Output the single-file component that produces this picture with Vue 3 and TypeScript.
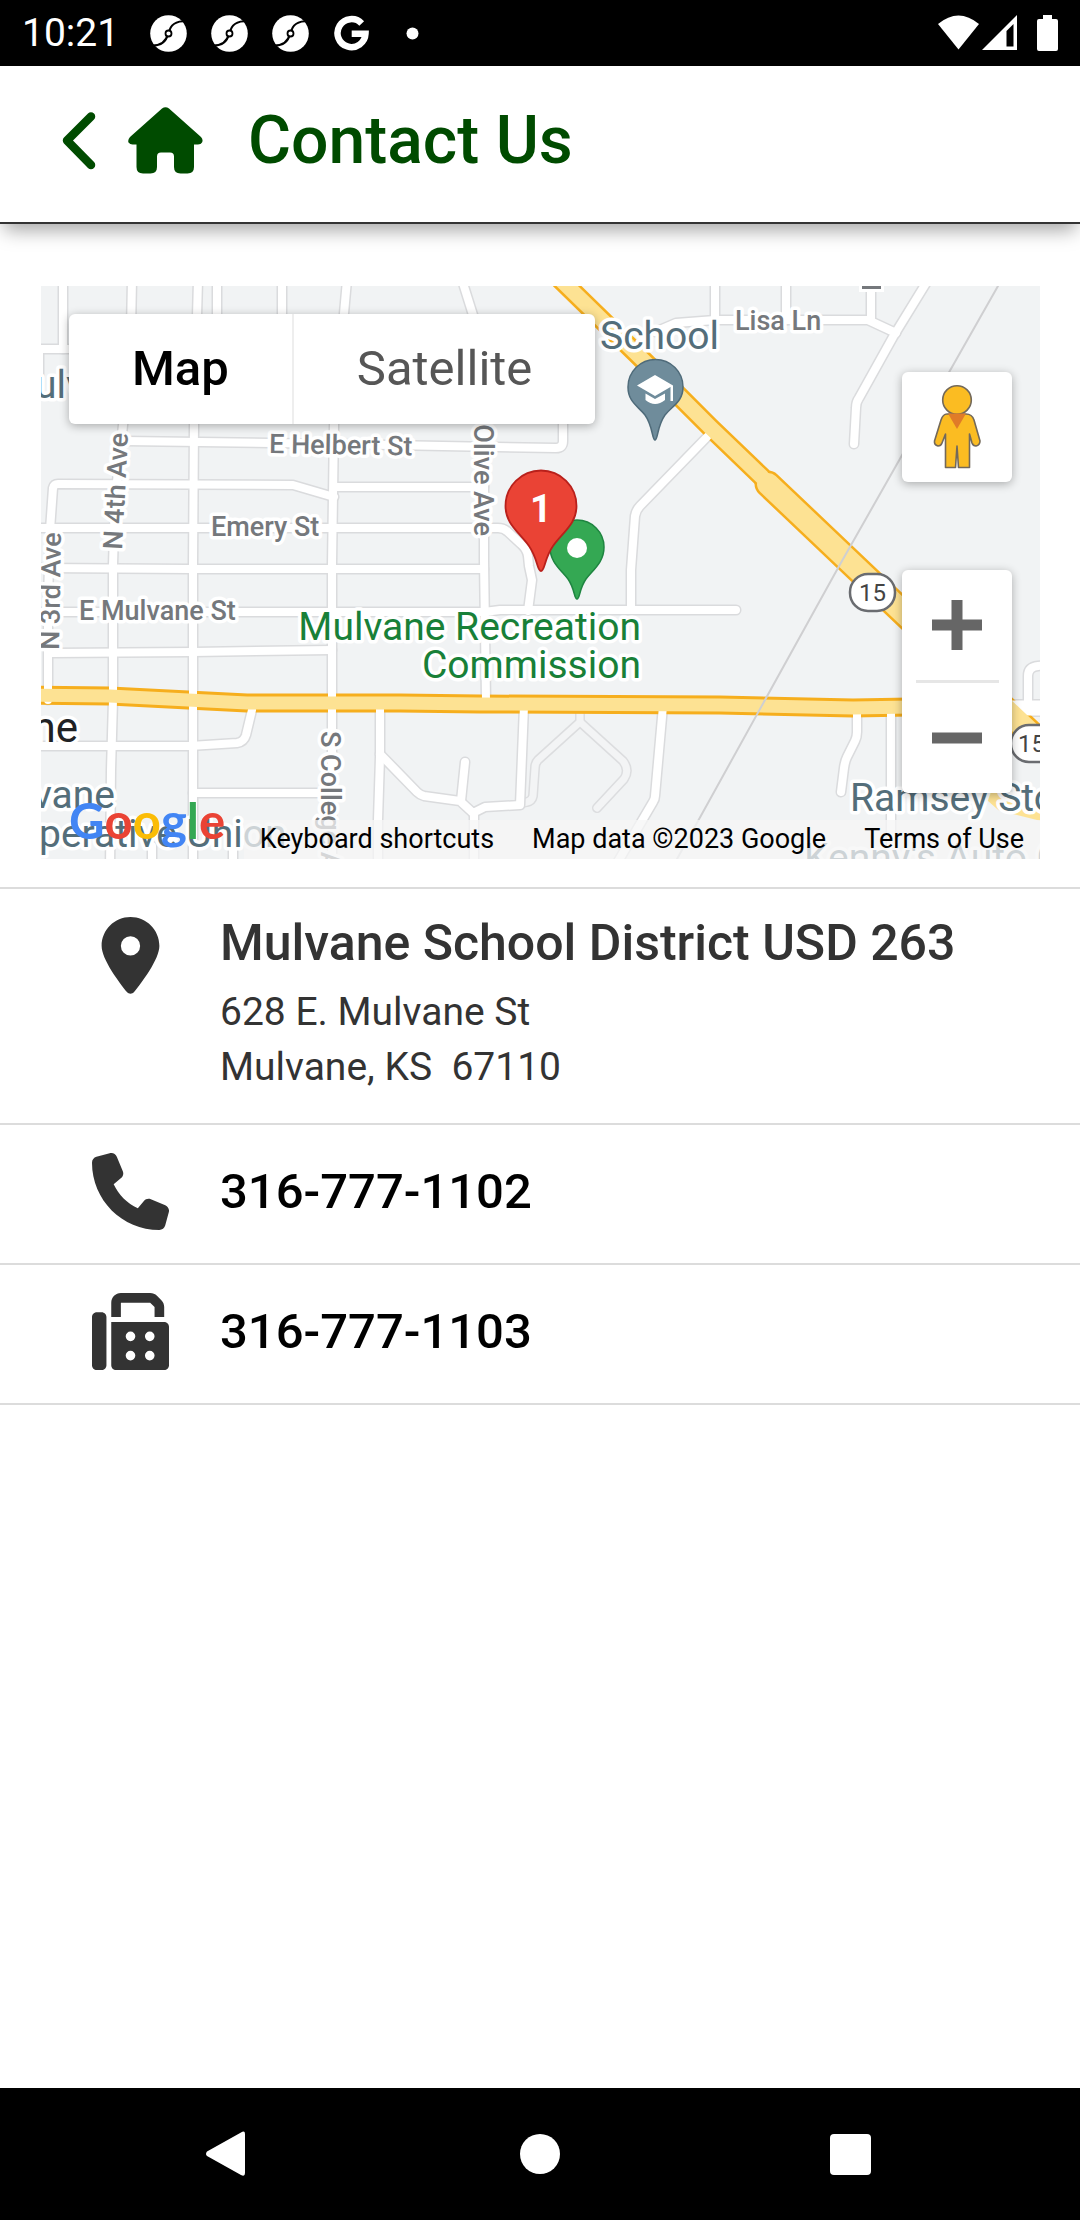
<script setup lang="ts">
import { ref } from 'vue'

type MapType = 'Map' | 'Satellite'

interface PhoneLine {
  id: string
  label: string
  number: string
  icon: string
}

const mapTypes: MapType[] = ['Map', 'Satellite']
const mapType = ref<MapType>('Map')

const pinIcon =
  'M215.7 499.2C267 435 384 279.4 384 192C384 86 298 0 192 0S0 86 0 192c0 87.4 117 243 168.3 307.2c12.3 15.3 35.1 15.3 47.4 0zM192 128a64 64 0 1 1 0 128 64 64 0 1 1 0-128z'

const phones: PhoneLine[] = [
  {
    id: 'phone',
    label: 'Phone',
    number: '316-777-1102',
    icon: 'M164.9 24.6c-7.7-18.6-28-28.5-47.4-23.2l-88 24C12.1 30.2 0 46 0 64C0 311.4 200.6 512 448 512c18 0 33.8-12.1 38.6-29.5l24-88c5.3-19.4-4.6-39.7-23.2-47.4l-96-40c-16.3-6.8-35.2-2.1-46.3 11.6L304.7 368C234.3 334.7 177.3 277.7 144 207.3L193.3 167c13.7-11.2 18.4-30 11.6-46.3l-40-96z',
  },
  {
    id: 'fax',
    label: 'Fax',
    number: '316-777-1103',
    icon: 'M128 64v96h64V64H386.7L416 93.3V160h64V93.3c0-17-6.7-33.3-18.7-45.3L432 18.7C420 6.7 403.7 0 386.7 0H192c-35.3 0-64 28.7-64 64zM0 160V480c0 17.7 14.3 32 32 32H64c17.7 0 32-14.3 32-32V160c0-17.7-14.3-32-32-32H32c-17.7 0-32 14.3-32 32zm480 32H128V480c0 17.7 14.3 32 32 32H480c17.7 0 32-14.3 32-32V224c0-17.7-14.3-32-32-32zM256 256a32 32 0 1 1 0 64 32 32 0 1 1 0-64zm96 32a32 32 0 1 1 64 0 32 32 0 1 1 -64 0zm32 96a32 32 0 1 1 0 64 32 32 0 1 1 0-64zM224 416a32 32 0 1 1 64 0 32 32 0 1 1 -64 0z',
  },
]

// Local streets: drawn once as a grey casing and once as the white surface.
const streets: string[] = [
  'M63 280V349',
  'M36 349H120',
  'M39 349V376',
  'M132 280L130 380L123 425L115 500L113 565V700L111 770L110 870',
  'M198 280L194 425L193 565V870',
  'M217 280V380',
  'M282 280V380',
  'M347 280L334 425L332 565V870',
  'M125 441L335 444L556 448Q563 448 563 441V415',
  'M48 700V600L50 530L53 488Q54 484 58 484L293 485L334 497',
  'M334 487H484',
  'M36 528H498Q504 528 508 532L521 544Q527 549 528 556L529 566L532 580L528 611',
  'M36 568L190 569H484',
  'M36 612H484L500 610H736',
  'M52 653L193 652L332 650',
  'M462 280L484 350V560L486 700',
  'M707 437L640 506Q636 510 635 516L631 570V608',
  'M715 280V320',
  'M786 280V320',
  'M871 288V320',
  'M655 332L676 323L715 320H868L896 333',
  'M928 280L893 337L859 398Q856 402 856 408L854 444',
  'M36 746H190L237 743Q244 742 246 735L252 710',
  'M193 793H332',
  'M152 846V870',
  'M233 846V870',
  'M380 706V757L378 820V870',
  'M380 754L417 792Q420 795 424 796L460 801L473 813L485 807L520 805L524 706',
  'M465 762L461 801',
  'M474 812V870',
  'M663 706L655 796Q655 799 653 802L616 865',
  'M857 706V732Q857 737 855 741L847 757Q845 761 844 768L841 792',
  'M891 706V870',
  'M1028 708V676Q1028 667 1038 666L1050 665',
]

const drives: string[] = [
  'M580 706V722L538 760Q535 763 535 768L533 796Q532 801 527 802L515 805',
  'M580 722L623 761Q630 770 624 779L597 808',
]

const highways: string[] = [
  'M30 695L110 696L188 700L247 703H400L480 704L720 705L853 708L910 707',
]
</script>

<template>
  <div class="screen">
    <div class="status">
      <span class="clock">10:21</span>
      <svg v-for="n in 3" :key="n" class="status-icon" viewBox="0 0 37 37" aria-hidden="true">
        <circle cx="18.500" cy="18.500" r="18.300" fill="#fff" />
        <path d="M37 6C26 6 20 9 19 18M18 19C16 27 11 31 1 30.500" fill="none" stroke="#000" stroke-width="2.200" />
        <circle cx="18.500" cy="18.500" r="3" fill="#fff" stroke="#000" stroke-width="1.800" />
      </svg>
      <svg class="status-icon" viewBox="0 0 37 37" aria-hidden="true">
        <path d="M28.700 8.500A14 14 0 1 0 32.500 18.700H18.700" fill="none" stroke="#fff" stroke-width="6.500" />
      </svg>
      <svg class="status-icon" viewBox="0 0 37 37" aria-hidden="true">
        <circle cx="18.500" cy="18.500" r="6" fill="#fff" />
      </svg>
      <svg class="signals" viewBox="0 0 122 37" aria-hidden="true">
        <path d="M0 9Q20.500 -8 41 9L20.500 34.500Z" fill="#fff" />
        <path d="M44 35L79 0V35Z" fill="#fff" />
        <path d="M68.500 16L75.500 9V31.500H68.500Z" fill="#000" />
        <path d="M105 0h9v4h4q2 0 2 2v28q0 2 -2 2h-17q-2 0 -2 -2V6q0 -2 2 -2h4z" fill="#fff" />
      </svg>
    </div>

    <header class="bar">
      <button class="bar-btn" type="button" aria-label="Back">
        <svg width="34" height="60" viewBox="0 0 34 60">
          <path d="M29 5.500L5 29.500L29 54" fill="none" stroke="#004b00" stroke-width="8.500" stroke-linecap="round" stroke-linejoin="round" />
        </svg>
      </button>
      <button class="bar-btn home" type="button" aria-label="Home">
        <svg width="75" height="69" viewBox="0 0 75 69">
          <path d="M34 1.500Q37.500 -1 41 1.500L73 30Q75.500 33 74 35.500Q73 37.500 70 37.500H66V60Q66 66.500 59.500 66.500H52.500Q46 66.500 46 60V49.500Q46 45.500 42 45.500H33Q29 45.500 29 49.500V60Q29 66.500 22.500 66.500H15Q8.500 66.500 8.500 60V37.500H4.500Q2 37.500 0.500 35.500Q-0.500 33 2 30Z" fill="#004b00" />
        </svg>
      </button>
      <h1>Contact Us</h1>
    </header>

    <main>
      <section class="map" aria-label="Map">
        <svg class="tiles" viewBox="41 286 999 573" preserveAspectRatio="xMidYMid slice">
          <rect x="40" y="286" width="1000" height="573" fill="#f1f3f4" />
          <g fill="none" stroke-linejoin="round" stroke-linecap="round">
            <path v-for="d in drives" :key="d" :d="d" stroke="#dcdddf" stroke-width="10" />
            <path v-for="d in drives" :key="d + 'f'" :d="d" stroke="#f3f4f5" stroke-width="7" />
            <path v-for="d in streets" :key="d" :d="d" stroke="#dadbdd" stroke-width="11" />
            <path d="M1005 708H1050" stroke="#dadbdd" stroke-width="18" />
            <path v-for="d in highways" :key="d" :d="d" stroke="#f6ae1d" stroke-width="19" />
            <path d="M560 279L645 362L710 427L762 477" stroke="#f6ae1d" stroke-width="20" />
            <path d="M768 484L848 560L1050 752" stroke="#f6ae1d" stroke-width="27" />
            <path d="M975 780L1002 804L1050 816" stroke="#fde293" stroke-width="14" />
            <path v-for="d in streets" :key="d + 'f'" :d="d" stroke="#fff" stroke-width="8" />
            <path d="M1005 708H1050" stroke="#fff" stroke-width="15" />
            <path v-for="d in highways" :key="d + 'f'" :d="d" stroke="#fde293" stroke-width="13" />
            <path d="M560 279L645 362L710 427L762 477" stroke="#fde293" stroke-width="15" />
            <path d="M768 484L848 560L1050 752" stroke="#fde293" stroke-width="22" />
            <path d="M998 286L838 568L677 859" stroke="#cfcfd1" stroke-width="2" />
          </g>
          <rect x="859" y="286" width="25" height="6" fill="#fff" />
          <rect x="862" y="286" width="19" height="3" fill="#75787c" />

          <g fill="#fff" stroke="#6a6c70" stroke-width="2.500">
            <rect x="850" y="574" width="45" height="37" rx="18" />
            <rect x="1011" y="725" width="45" height="37" rx="18" />
          </g>
          <g class="shield">
            <text x="859" y="601">15</text>
            <text x="1018" y="752">15</text>
          </g>

          <g class="street">
            <text transform="translate(269 453) rotate(1)">E Helbert St</text>
            <text x="211" y="536">Emery St</text>
            <text x="79" y="620">E Mulvane St</text>
            <text x="735" y="330">Lisa Ln</text>
            <text transform="translate(122 550) rotate(-87)">N 4th Ave</text>
            <text transform="translate(59 650) rotate(-89)">N 3rd Ave</text>
            <text transform="translate(474 536) rotate(90)" text-anchor="end">Olive Ave</text>
            <text transform="translate(321 731) rotate(90)">S College Ave</text>
          </g>

          <g class="place">
            <text x="600" y="349">School</text>
            <text x="35" y="398">ulv</text>
            <text x="115" y="808" text-anchor="end">vane</text>
            <text x="39" y="847">perative Union</text>
            <text x="850" y="811">Ramsey Stor</text>
            <text x="804" y="871">Kenny's Auto Ce</text>
            <text class="town" x="78" y="742" text-anchor="end">ne</text>
          </g>
          <g class="place park" text-anchor="end">
            <text x="641" y="640">Mulvane Recreation</text>
            <text x="641" y="678">Commission</text>
          </g>

          <path d="M655 440C652 440 653 426 645 415C638 406 628 402 628 387A27.500 27.500 0 0 1 683 387C683 402 672 406 665 415C657 426 658 440 655 440Z" fill="#6f8c9b" stroke="#4f6b7a" stroke-width="1.500" />
          <path d="M655 375L673 385.500V401H670.500V387L655 396L637 385.500Z" fill="#fff" />
          <path d="M645.500 393.500L655 399L665 393.500V400Q655 408 645.500 400Z" fill="#fff" />

          <path d="M577 599C574 599 575 589 568 579C560 569 550 562 550 547A27 27 0 0 1 604 547C604 562 594 569 586 579C579 589 580 599 577 599Z" fill="#34a853" stroke="#1e8540" stroke-width="1.500" />
          <circle cx="577" cy="548" r="10" fill="#fff" />

          <path d="M541 571C537 571 538 559 529 546C519 532 505.500 524 505.500 506A35.500 35.500 0 0 1 576.500 506C576.500 524 563 532 553 546C544 559 545 571 541 571Z" fill="#ea4335" stroke="#b9201b" stroke-width="1.800" />
          <text class="marker" x="541" y="522" text-anchor="middle">1</text>
        </svg>

        <div class="controls">
          <div class="types" role="group" aria-label="Map type">
            <button
              v-for="type in mapTypes"
              :key="type"
              type="button"
              :class="{ active: type === mapType }"
              @click="mapType = type"
            >
              {{ type }}
            </button>
          </div>
          <div class="side">
            <button class="tool" type="button" aria-label="Drag Pegman onto the map">
              <svg width="50" height="86" viewBox="0 0 50 86">
                <g fill="#fbbc22" stroke="#73695a" stroke-width="1.600" stroke-linejoin="round">
                  <path d="M15 30H34Q40 30 42 36L48 57Q48 61 44 62Q41 62 40 59L37.500 50V83.500H26.500L25 62L23.500 83.500H13.500V50L10 59Q9 62 6 62Q2 61 2.500 57L9 36Q11 30 15 30Z" />
                  <circle cx="25" cy="16" r="14.300" />
                </g>
                <path d="M16 29.500H34L25 45Z" fill="#e07b28" />
              </svg>
            </button>
            <div class="zoom">
              <button class="tool" type="button" aria-label="Zoom in">
                <svg width="50" height="50" viewBox="0 0 50 50"><path d="M25 0V50M0 25H50" stroke="#666" stroke-width="11" /></svg>
              </button>
              <button class="tool" type="button" aria-label="Zoom out">
                <svg width="50" height="50" viewBox="0 0 50 50"><path d="M0 25H50" stroke="#666" stroke-width="11" /></svg>
              </button>
            </div>
          </div>
        </div>

        <a class="google" href="#google" aria-label="Google">
          <span class="b">G</span><span class="r">o</span><span class="y">o</span><span class="b">g</span><span class="g">l</span><span class="r">e</span>
        </a>
        <div class="credits">
          <button type="button">Keyboard shortcuts</button>
          <span>Map data ©2023 Google</span>
          <a href="#terms">Terms of Use</a>
        </div>
      </section>

      <ul class="contacts">
        <li class="row address">
          <svg class="row-icon" viewBox="-64 0 512 512" aria-hidden="true"><path :d="pinIcon" /></svg>
          <div>
            <h2>Mulvane School District USD 263</h2>
            <address>628 E. Mulvane St<br />Mulvane, KS&nbsp; 67110</address>
          </div>
        </li>
        <li v-for="line in phones" :key="line.id" class="row">
          <svg class="row-icon" viewBox="0 0 512 512" role="img" :aria-label="line.label"><path :d="line.icon" /></svg>
          <a :href="'tel:' + line.number">{{ line.number }}</a>
        </li>
      </ul>
    </main>

    <nav class="system" aria-label="System navigation">
      <button type="button" aria-label="Back">
        <svg width="48" height="48" viewBox="0 0 48 48"><path d="M35 2.500Q39 0 39 4V43Q39 47 35 45L1 26Q-1 24 1 21.500Z" fill="#fff" /></svg>
      </button>
      <button type="button" aria-label="Home">
        <svg width="48" height="48" viewBox="0 0 48 48"><circle cx="24" cy="24" r="20" fill="#fff" /></svg>
      </button>
      <button type="button" aria-label="Recent apps">
        <svg width="48" height="48" viewBox="0 0 48 48"><rect x="4" y="4" width="41" height="41" rx="4" fill="#fff" /></svg>
      </button>
    </nav>
  </div>
</template>

<style>
body {
  margin: 0;
  background: #fff;
}
</style>

<style scoped>
.screen {
  display: flex;
  flex-direction: column;
  min-height: 100vh;
  font-family: Roboto, 'Liberation Sans', sans-serif;
  color: #000;
}

button {
  margin: 0;
  padding: 0;
  border: 0;
  background: none;
  font: inherit;
  color: inherit;
}

a {
  color: inherit;
  text-decoration: none;
}

svg {
  display: block;
}

.status {
  display: flex;
  align-items: center;
  gap: 24px;
  height: 66px;
  padding: 0 20px 0 22px;
  background: #000;
  color: #fff;
}

.clock {
  width: 104px;
  font-size: 39px;
  line-height: 44px;
}

.status-icon {
  width: 37px;
  height: 37px;
}

.signals {
  width: 122px;
  height: 37px;
  margin-left: auto;
}

.bar {
  position: relative;
  display: flex;
  align-items: center;
  height: 150px;
  padding: 0 0 6px 62px;
  border-bottom: 2px solid #333;
  background: #fff;
  box-shadow: 0 10px 18px -4px rgba(0, 0, 0, 0.36);
}

.home {
  margin: 0 45px 0 32px;
}

h1 {
  margin: 0;
  font-size: 66px;
  font-weight: 500;
  line-height: 80px;
  color: #004b00;
}

main {
  flex: 1;
}

.map {
  position: relative;
  height: 573px;
  margin: 62px 40px 28px 41px;
  overflow: hidden;
}

.tiles {
  width: 100%;
  height: 100%;
}

.tiles text {
  paint-order: stroke;
  stroke: #fff;
  stroke-linejoin: round;
}

.street text {
  font-size: 27px;
  font-weight: 500;
  fill: #75787c;
  stroke-width: 7px;
}

.place text {
  font-size: 39px;
  fill: #546e7a;
  stroke-width: 7px;
}

.place .town {
  font-size: 42px;
  fill: #202124;
}

.park text {
  fill: #188038;
}

.shield text {
  font-size: 24px;
  fill: #444;
  stroke: none;
}

.tiles .marker {
  font-size: 38px;
  font-weight: 700;
  fill: #fff;
  stroke: none;
}

.controls {
  position: absolute;
  inset: 28px;
  display: flex;
  justify-content: space-between;
  align-items: flex-start;
}

.types {
  display: flex;
  border-radius: 6px;
  background: #fff;
  box-shadow: 0 2px 10px rgba(0, 0, 0, 0.3);
}

.types button {
  height: 110px;
  padding: 0 63px 2px;
  font-size: 49px;
  color: #565656;
}

.types button.active {
  font-weight: 500;
  color: #000;
}

.types button + button {
  border-left: 2px solid #eee;
}

.side {
  display: flex;
  flex-direction: column;
  gap: 88px;
  padding-top: 58px;
}

.tool {
  display: flex;
  align-items: center;
  justify-content: center;
  width: 110px;
  height: 110px;
}

.side > .tool,
.zoom {
  border-radius: 6px;
  background: #fff;
  box-shadow: 0 2px 10px rgba(0, 0, 0, 0.3);
}

.zoom {
  display: flex;
  flex-direction: column;
  align-items: center;
}

.zoom::before {
  content: '';
  order: 1;
  width: 83px;
  height: 3px;
  background: #e6e6e6;
}

.zoom .tool + .tool {
  order: 2;
}

.google {
  position: absolute;
  left: 28px;
  bottom: 10px;
  display: flex;
  font-family: Lato, sans-serif;
  font-size: 49px;
  font-weight: 700;
  line-height: 58px;
}

.b {
  color: #4285f4;
}

.r {
  color: #ea4335;
}

.y {
  color: #fbbc05;
}

.g {
  color: #34a853;
}

.credits {
  position: absolute;
  right: 0;
  bottom: 0;
  display: flex;
  gap: 38px;
  padding: 0 16px;
  background: rgba(245, 245, 245, 0.75);
  font-size: 27px;
  line-height: 39px;
}

.contacts {
  margin: 0;
  padding: 0;
  list-style: none;
  border-top: 2px solid #dcdcdc;
}

.row {
  display: flex;
  align-items: center;
  gap: 51px;
  padding: 28px 40px 33px 92px;
  border-bottom: 2px solid #dcdcdc;
  font-size: 49px;
  font-weight: 500;
  line-height: 52px;
}

.address {
  align-items: flex-start;
  padding-bottom: 28px;
  color: #333;
}

.row-icon {
  flex: none;
  width: 77px;
  height: 77px;
  fill: #333;
}

h2 {
  margin: 0 0 16px;
  font-size: 50px;
  font-weight: 500;
  line-height: 52px;
}

address {
  font-size: 39px;
  font-style: normal;
  font-weight: 400;
  line-height: 55px;
}

.system {
  display: flex;
  align-items: center;
  justify-content: center;
  gap: 262px;
  height: 132px;
  background: #000;
}
</style>
